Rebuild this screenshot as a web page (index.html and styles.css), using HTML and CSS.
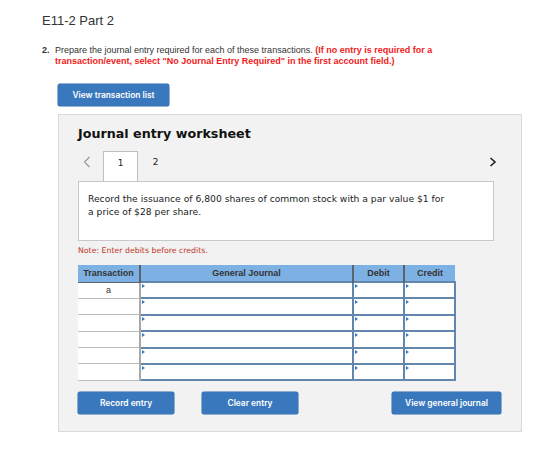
FILE: index.html
```html
<!DOCTYPE html>
<html>
<head>
<meta charset="utf-8">
<link rel="stylesheet" href="styles.css">
</head>
<body>
  <h1 class="title">E11-2 Part 2</h1>
  <div class="question">
    <span class="qnum">2.</span>
    <p class="qtext">Prepare the journal entry required for each of these transactions. <b class="warn">(If no entry is required for a transaction/event, select "No Journal Entry Required" in the first account field.)</b></p>
  </div>
  <button class="btn btn-list">View transaction list</button>

  <section class="worksheet">
    <h2 class="ws-title">Journal entry worksheet</h2>
    <div class="tabs">
      <span class="arrow arrow-prev">
        <svg width="8" height="12" viewBox="0 0 8 12"><path d="M6.5 1 L1.5 6 L6.5 11" fill="none" stroke="#9a9a9a" stroke-width="1.2"/></svg>
      </span>
      <span class="tab tab-active">1</span>
      <span class="tab">2</span>
      <span class="arrow arrow-next">
        <svg width="8" height="10" viewBox="0 0 8 10"><path d="M1.5 1 L6 5 L1.5 9" fill="none" stroke="#222" stroke-width="1.6"/></svg>
      </span>
    </div>
    <div class="prompt">
      <p>Record the issuance of 6,800 shares of common stock with a par value $1 for<br>a price of $28 per share.</p>
    </div>
    <p class="note">Note: Enter debits before credits.</p>

    <table class="journal">
      <thead>
        <tr>
          <th class="c-trans">Transaction</th>
          <th class="c-acct">General Journal</th>
          <th class="c-amt">Debit</th>
          <th class="c-amt">Credit</th>
        </tr>
      </thead>
      <tbody>
        <tr><td class="trans">a</td><td class="inp"><i></i></td><td class="inp"><i></i></td><td class="inp"><i></i></td></tr>
        <tr><td class="trans"></td><td class="inp"><i></i></td><td class="inp"><i></i></td><td class="inp"><i></i></td></tr>
        <tr><td class="trans"></td><td class="inp"><i></i></td><td class="inp"><i></i></td><td class="inp"><i></i></td></tr>
        <tr><td class="trans"></td><td class="inp"><i></i></td><td class="inp"><i></i></td><td class="inp"><i></i></td></tr>
        <tr><td class="trans"></td><td class="inp"><i></i></td><td class="inp"><i></i></td><td class="inp"><i></i></td></tr>
        <tr><td class="trans"></td><td class="inp"><i></i></td><td class="inp"><i></i></td><td class="inp"><i></i></td></tr>
      </tbody>
    </table>

    <div class="actions">
      <button class="btn btn-action">Record entry</button>
      <button class="btn btn-action">Clear entry</button>
      <button class="btn btn-journal">View general journal</button>
    </div>
  </section>
</body>
</html>
```

FILE: styles.css
```css
* { box-sizing: border-box; }

body {
  margin: 0;
  padding: 13px 0 0 42px;
  background: #fff;
  font-family: "Liberation Sans", Arial, sans-serif;
  color: #222;
}

.title {
  margin: 0;
  font-size: 13px;
  font-weight: 400;
  line-height: 16px;
  color: #333;
}

.question {
  display: flex;
  margin-top: 16px;
  font-size: 9px;
  line-height: 11px;
  color: #333;
}

.qnum {
  width: 13px;
  font-weight: 700;
  flex: none;
}

.qtext {
  margin: 0;
  width: 388px;
}

.warn { color: #f01a1a; }

.btn {
  border: 0;
  border-radius: 2px;
  background: #3a78bd;
  color: #fff;
  font-family: Inter, "Liberation Sans", sans-serif;
  font-weight: 600;
  font-size: 8.4px;
  height: 22px;
  padding: 0;
  box-shadow: 0 0 0 0.5px #2f67a6;
}

.btn-list {
  display: block;
  margin: 17px 0 0 16px;
  width: 111px;
}

.worksheet {
  margin: 8px 0 0 16px;
  width: 464px;
  height: 318px;
  background: #f2f2f2;
  border: 1px solid #d9d9d9;
  padding: 11px 0 0 19px;
  font-family: "DejaVu Sans", Verdana, sans-serif;
}

.ws-title {
  margin: 0;
  font-size: 12.7px;
  font-weight: 700;
  line-height: 16px;
  color: #111;
}

.tabs {
  display: flex;
  align-items: stretch;
  height: 30px;
  margin-top: 9px;
  width: 416px;
}

.arrow {
  display: flex;
  align-items: center;
  height: 22px;
}

.arrow-prev {
  margin-left: 5px;
  width: 20px;
}

.arrow-next {
  margin-left: auto;
  margin-right: -3px;
}

.tab {
  width: 35px;
  height: 22px;
  display: flex;
  align-items: center;
  justify-content: center;
  font-size: 9px;
  color: #222;
}

.tab-active {
  background: #fff;
  border: 1px solid #bfbfbf;
  border-bottom: 0;
  height: 30px;
  padding-bottom: 8px;
  position: relative;
  z-index: 1;
  margin-bottom: -1px;
}

.prompt {
  width: 416px;
  height: 60px;
  background: #fff;
  border: 1px solid #c8c8c8;
  padding: 10px 9px;
}

.prompt p {
  margin: 0;
  font-size: 9.2px;
  line-height: 13px;
  color: #222;
}

.note {
  margin: 5px 0 0;
  font-size: 7.8px;
  line-height: 10px;
  color: #c0392b;
}

.journal {
  margin-top: 9px;
  border-collapse: collapse;
  width: 378px;
  font-family: "Liberation Sans", Arial, sans-serif;
  font-size: 9px;
}

.journal th {
  background: #7eb1e3;
  height: 17px;
  padding: 0;
  font-weight: 700;
  color: #333;
  border-left: 2px solid #5a6470;
  border-bottom: 1px solid #5a6470;
}

.journal th:first-child { border-left: 0; }

.c-trans { width: 62px; }
.c-amt { width: 51px; }

.journal td {
  height: 16.4px;
  padding: 0;
}

.trans {
  background: #fff;
  text-align: center;
  color: #333;
  border-bottom: 1px solid #bdbdbd;
  border-right: 2px solid #a8a8a8;
}

.inp {
  position: relative;
  background: #fff;
  border: 2px solid #6386ad;
}

.inp i {
  position: absolute;
  left: 1px;
  top: 1px;
  width: 0;
  height: 0;
  border-top: 2px solid transparent;
  border-bottom: 2px solid transparent;
  border-left: 3px solid #3a78bd;
}

.actions {
  display: flex;
  margin-top: 11px;
  width: 423px;
}

.btn-action {
  width: 96px;
  margin-right: 28px;
}

.btn-journal {
  width: 109px;
  margin-left: auto;
}
```
